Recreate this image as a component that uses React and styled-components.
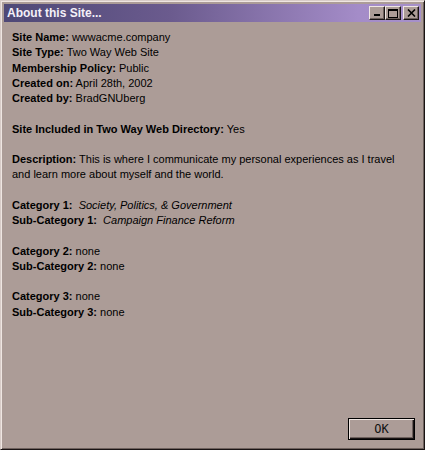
import React from 'react'
import styled, { createGlobalStyle } from 'styled-components'

const GlobalStyle = createGlobalStyle`
  html, body {
    margin: 0;
    padding: 0;
    background: #ac9c97;
  }
  * { box-sizing: border-box; }
`

const Window = styled.div`
  width: 425px;
  height: 450px;
  background: #ac9c97;
  border-top: 1px solid #d8ccc8;
  border-left: 1px solid #d8ccc8;
  border-right: 1px solid #1a1414;
  border-bottom: 1px solid #1a1414;
  box-shadow: inset 1px 1px 0 #efe6e2, inset -1px -1px 0 #6e615d;
  padding: 3px;
  display: flex;
  flex-direction: column;
  font-family: "Liberation Sans", Arial, sans-serif;
`

const TitleBar = styled.div`
  height: 18px;
  display: flex;
  align-items: center;
  justify-content: space-between;
  padding: 0 2px 0 3px;
  background: linear-gradient(to right, #4e4876 0%, #6b5b8e 40%, #a48cc8 85%, #a690ca 100%);
`

const Title = styled.span`
  color: #f4f0f8;
  font-weight: bold;
  font-size: 12px;
`

const Controls = styled.div`
  display: flex;
  align-items: center;
`

const CtlButton = styled.button`
  width: 16px;
  height: 14px;
  margin-left: ${p => (p.$gap ? 2 : 0)}px;
  padding: 0;
  background: #ac9c97;
  border-top: 1px solid #efe6e2;
  border-left: 1px solid #efe6e2;
  border-right: 1px solid #1a1414;
  border-bottom: 1px solid #1a1414;
  box-shadow: inset -1px -1px 0 #6e615d;
  display: flex;
  align-items: center;
  justify-content: center;
`

const Content = styled.div`
  flex: 1;
  padding: 8px 8px 0 8px;
  font-size: 11px;
  line-height: 15.25px;
  color: #000;
`

const Block = styled.div`
  margin-bottom: 15.25px;
`

const Line = styled.div`
  white-space: ${p => (p.$wrap ? 'normal' : 'pre')};
  padding-right: ${p => (p.$wrap ? 4 : 0)}px;
`

const Label = styled.b`
  font-weight: bold;
`

const Value = styled.span`
  font-style: ${p => (p.$italic ? 'italic' : 'normal')};
`

const Footer = styled.div`
  display: flex;
  justify-content: flex-end;
  padding: 0 6px 6px 0;
`

const OkButton = styled.button`
  width: 67px;
  height: 22px;
  padding: 0;
  background: #ac9c97;
  border: 1px solid #000;
  box-shadow: inset 1px 1px 0 #efe6e2, inset -1px -1px 0 #1a1414, inset -2px -2px 0 #6e615d;
  font-family: "DejaVu Sans Mono", "Liberation Mono", monospace;
  font-size: 12px;
  color: #111;
`

const Row = ({ label, value, italic }) => (
  <Line>
    <Label>{label}</Label>{italic ? '  ' : ' '}<Value $italic={italic}>{value}</Value>
  </Line>
)

export default function App() {
  return (
    <>
      <GlobalStyle />
      <Window>
        <TitleBar>
          <Title>About this Site...</Title>
          <Controls>
            <CtlButton aria-label="minimize">
              <svg width="8" height="8" viewBox="0 0 8 8"><rect x="1" y="5" width="6" height="2" fill="#000" /></svg>
            </CtlButton>
            <CtlButton aria-label="maximize">
              <svg width="10" height="9" viewBox="0 0 10 9"><rect x="0.5" y="0.5" width="9" height="8" fill="none" stroke="#000" /><rect x="0" y="0" width="10" height="2" fill="#000" /></svg>
            </CtlButton>
            <CtlButton $gap aria-label="close">
              <svg width="9" height="8" viewBox="0 0 9 8"><path d="M1 0.5 L8 7.5 M8 0.5 L1 7.5" stroke="#000" strokeWidth="1.6" /></svg>
            </CtlButton>
          </Controls>
        </TitleBar>
        <Content>
          <Block>
            <Row label="Site Name:" value="wwwacme.company" />
            <Row label="Site Type:" value="Two Way Web Site" />
            <Row label="Membership Policy:" value="Public" />
            <Row label="Created on:" value="April 28th, 2002" />
            <Row label="Created by:" value="BradGNUberg" />
          </Block>
          <Block>
            <Row label="Site Included in Two Way Web Directory:" value="Yes" />
          </Block>
          <Block>
            <Line $wrap>
              <Label>Description:</Label> This is where I communicate my personal experiences as I travel and learn more about myself and the world.
            </Line>
          </Block>
          <Block>
            <Row label="Category 1:" value="Society, Politics, & Government" italic />
            <Row label="Sub-Category 1:" value="Campaign Finance Reform" italic />
          </Block>
          <Block>
            <Row label="Category 2:" value="none" />
            <Row label="Sub-Category 2:" value="none" />
          </Block>
          <Block>
            <Row label="Category 3:" value="none" />
            <Row label="Sub-Category 3:" value="none" />
          </Block>
        </Content>
        <Footer>
          <OkButton>OK</OkButton>
        </Footer>
      </Window>
    </>
  )
}
